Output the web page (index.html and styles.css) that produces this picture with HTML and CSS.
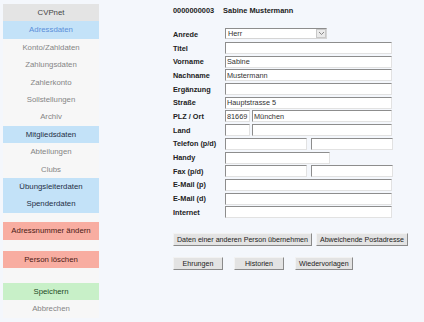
FILE: index.html
```html
<!DOCTYPE html>
<html lang="de">
<head>
  <meta charset="UTF-8" />
  <title>CVPnet - Adressdaten</title>
  <link rel="stylesheet" href="styles.css">
</head>
<body>
  <div class="page">
    <div class="sidebar">
      <div class="nav-item head">CVPnet</div>
      <div class="nav-item active">Adressdaten</div>
      <div class="nav-item">Konto/Zahldaten</div>
      <div class="nav-item">Zahlungsdaten</div>
      <div class="nav-item">Zahlerkonto</div>
      <div class="nav-item">Sollstellungen</div>
      <div class="nav-item">Archiv</div>
      <div class="nav-item section">Mitgliedsdaten</div>
      <div class="nav-item">Abteilungen</div>
      <div class="nav-item">Clubs</div>
      <div class="nav-item section">Übungsleiterdaten</div>
      <div class="nav-item section">Spenderdaten</div>
      <div class="nav-item danger first-danger">Adressnummer ändern</div>
      <div class="nav-item danger second-danger">Person löschen</div>
      <div class="nav-item save">Speichern</div>
      <div class="nav-item">Abbrechen</div>
    </div>

    <div class="main">
      <div class="person-head">
        <span class="person-nr">0000000003</span>
        <span>Sabine Mustermann</span>
      </div>

      <div class="form">
        <label>Anrede</label>
        <div class="field">
          <div class="select">
            <span>Herr</span>
            <span class="arrow">
              <svg width="7" height="5" viewBox="0 0 7 5"><path d="M1 1 L3.5 3.5 L6 1" fill="none" stroke="#888" stroke-width="1"/></svg>
            </span>
          </div>
        </div>

        <label>Titel</label>
        <div class="field"><input class="full" type="text" value=""></div>

        <label>Vorname</label>
        <div class="field"><input class="full" type="text" value="Sabine"></div>

        <label>Nachname</label>
        <div class="field"><input class="full" type="text" value="Mustermann"></div>

        <label>Ergänzung</label>
        <div class="field"><input class="full" type="text" value=""></div>

        <label>Straße</label>
        <div class="field"><input class="full" type="text" value="Hauptstrasse 5"></div>

        <label>PLZ / Ort</label>
        <div class="field">
          <input class="short" type="text" value="81669">
          <input class="rest" type="text" value="München">
        </div>

        <label>Land</label>
        <div class="field">
          <input class="short" type="text" value="">
          <input class="rest" type="text" value="">
        </div>

        <label>Telefon (p/d)</label>
        <div class="field">
          <input class="half" type="text" value="">
          <input class="half" type="text" value="">
        </div>

        <label>Handy</label>
        <div class="field"><input class="handy" type="text" value=""></div>

        <label>Fax (p/d)</label>
        <div class="field">
          <input class="half" type="text" value="">
          <input class="half" type="text" value="">
        </div>

        <label>E-Mail (p)</label>
        <div class="field"><input class="full" type="text" value=""></div>

        <label>E-Mail (d)</label>
        <div class="field"><input class="full" type="text" value=""></div>

        <label>Internet</label>
        <div class="field"><input class="full" type="text" value=""></div>
      </div>

      <div class="btn-row first">
        <button>Daten einer anderen Person übernehmen</button>
        <button>Abweichende Postadresse</button>
      </div>
      <div class="btn-row second">
        <button class="w50">Ehrungen</button>
        <button class="w50">Historien</button>
        <button>Wiedervorlagen</button>
      </div>
    </div>
  </div>
</body>
</html>
```

FILE: styles.css
```css
* {
  box-sizing: border-box;
}

body {
  margin: 0;
  background: #f4f7fc;
  font-family: 'Liberation Sans', Arial, sans-serif;
  font-size: 7.8px;
  color: #222;
}

.page {
  display: flex;
  width: 424px;
  height: 322px;
}

.sidebar {
  width: 96px;
  margin: 4px 0 0 3px;
  height: 314px;
  background: #f7f7f7;
  display: flex;
  flex-direction: column;
}

.nav-item {
  height: 17.4px;
  line-height: 17.4px;
  text-align: center;
  color: #858585;
}

.nav-item.head {
  background: #e4e4e4;
  color: #444;
}

.nav-item.active {
  background: #c3e2f8;
  color: #5b8fd8;
}

.nav-item.section {
  background: #c3e2f8;
  color: #1f2f45;
}

.nav-item.danger {
  background: #f8ada1;
  color: #4a1a14;
}

.first-danger {
  margin-top: 9.5px;
}

.second-danger {
  margin-top: 11px;
}

.nav-item.save {
  margin-top: 15px;
  background: #c8f0c8;
  color: #1e4a1e;
}

.main {
  margin-left: 74px;
  padding-top: 6px;
  flex: 1;
}

.person-head {
  font-weight: bold;
  font-size: 7.4px;
  height: 9px;
  line-height: 9px;
  display: flex;
  gap: 9px;
  color: #222;
}

.form {
  margin-top: 12.5px;
  display: grid;
  grid-template-columns: 52px 167px;
  grid-auto-rows: 13.7px;
  align-items: center;
}

.form label {
  font-weight: bold;
  font-size: 7.3px;
  color: #222;
}

.field {
  display: flex;
  gap: 2px;
  height: 12px;
}

input {
  height: 12px;
  margin: 0;
  padding: 0 1px;
  border: 1px solid;
  border-color: #8d8d8d #e2e2e2 #e2e2e2 #8d8d8d;
  background: #fff;
  font-family: 'Liberation Sans', Arial, sans-serif;
  font-size: 7.3px;
  color: #333;
}

input.full {
  width: 167px;
}

input.short {
  width: 25px;
}

input.rest {
  flex: 1;
  min-width: 0;
}

input.half {
  width: 82px;
}

input.half + input.half {
  margin-left: 2px;
}

input.handy {
  width: 105px;
}

.select {
  width: 102px;
  height: 11px;
  display: flex;
  align-items: center;
  justify-content: space-between;
  padding-left: 2px;
  border: 1px solid;
  border-color: #8d8d8d #d5d5d5 #d5d5d5 #8d8d8d;
  background: #fff;
  font-size: 7.3px;
  color: #333;
}

.select .arrow {
  width: 10px;
  height: 9px;
  background: #eaeaea;
  border: 1px solid #c8c8c8;
  display: flex;
  align-items: center;
  justify-content: center;
}

.btn-row {
  display: flex;
  gap: 4px;
}

.btn-row.first {
  margin-top: 14px;
}

.btn-row.second {
  margin-top: 11px;
  gap: 11px;
}

button {
  height: 13px;
  padding: 0 3px;
  border: 1px solid;
  border-color: #f2f2f2 #8a8a8a #8a8a8a #f2f2f2;
  background: #e3e3e3;
  font-family: 'Liberation Sans', Arial, sans-serif;
  font-size: 7.1px;
  color: #222;
}

button.w50 {
  width: 50px;
}
```
